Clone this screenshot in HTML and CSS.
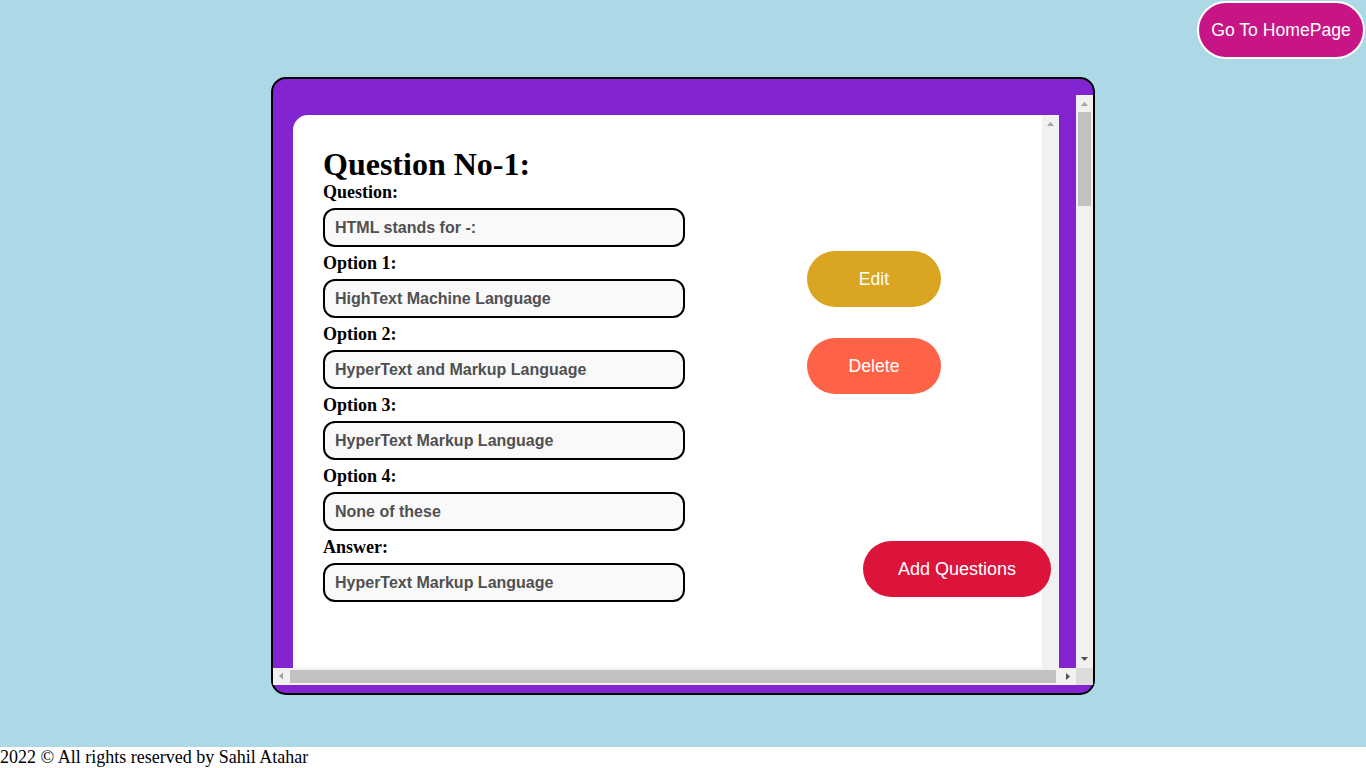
FILE: index.html
```html
<!DOCTYPE html>
<html lang="en">
<head>
<meta charset="utf-8">
<title>Questions</title>
<link rel="stylesheet" href="styles.css">
</head>
<body>
<main class="page">
  <div class="topbar">
    <button class="home-btn">Go To HomePage</button>
  </div>
  <section class="frame">
    <div class="viewport">
      <div class="scroll-area">
        <article class="card">
          <div class="card-body">
            <div class="form">
              <h1 class="q-title">Question No-1:</h1>
              <label class="q-label">Question:</label>
              <input class="q-input" type="text" value="HTML stands for -:" readonly>
              <label class="q-label">Option 1:</label>
              <input class="q-input" type="text" value="HighText Machine Language" readonly>
              <label class="q-label">Option 2:</label>
              <input class="q-input" type="text" value="HyperText and Markup Language" readonly>
              <label class="q-label">Option 3:</label>
              <input class="q-input" type="text" value="HyperText Markup Language" readonly>
              <label class="q-label">Option 4:</label>
              <input class="q-input" type="text" value="None of these" readonly>
              <label class="q-label">Answer:</label>
              <input class="q-input" type="text" value="HyperText Markup Language" readonly>
            </div>
            <div class="actions">
              <button class="pill edit">Edit</button>
              <button class="pill delete">Delete</button>
            </div>
          </div>
          <div class="sb sb-v">
            <span class="sb-btn"><svg width="17" height="17" viewBox="0 0 17 17"><polygon class="arr-off" points="5,11 12,11 8.5,7"/></svg></span>
            <span class="sb-track"></span>
            <span class="sb-btn"><svg width="17" height="17" viewBox="0 0 17 17"><polygon class="arr-off" points="5,6 12,6 8.5,10"/></svg></span>
          </div>
        </article>
      </div>
      <div class="sb sb-v">
        <span class="sb-btn"><svg width="17" height="17" viewBox="0 0 17 17"><polygon class="arr-off" points="5,11 12,11 8.5,7"/></svg></span>
        <span class="sb-track"><span class="thumb-v"></span></span>
        <span class="sb-btn"><svg width="17" height="17" viewBox="0 0 17 17"><polygon class="arr-on" points="5,6 12,6 8.5,10"/></svg></span>
      </div>
      <div class="sb sb-h">
        <span class="sb-btn"><svg width="17" height="17" viewBox="0 0 17 17"><polygon class="arr-off" points="6,8 10,4.5 10,11.5"/></svg></span>
        <span class="sb-track"><span class="thumb-h"></span></span>
        <span class="sb-btn"><svg width="17" height="17" viewBox="0 0 17 17"><polygon class="arr-on" points="11,8.5 7,5 7,12"/></svg></span>
      </div>
      <div class="sb-corner"></div>
    </div>
    <button class="pill add">Add Questions</button>
  </section>
</main>
<footer class="footer">2022 © All rights reserved by Sahil Atahar</footer>
</body>
</html>
```

FILE: styles.css
```css
html, body {
  margin: 0;
  padding: 0;
  background: #ffffff;
  font-family: "Liberation Serif", "Times New Roman", serif;
}

.page {
  background: #add8e6;
  height: 747px;
  display: flex;
  flex-direction: column;
}

.topbar {
  display: flex;
  justify-content: flex-end;
}

.home-btn {
  margin: 1px 1px 0 0;
  width: 168px;
  height: 58px;
  box-sizing: border-box;
  border: 2px solid #ffffff;
  border-radius: 29px;
  background: #c71585;
  color: #ffffff;
  font-family: "Liberation Sans", Arial, sans-serif;
  font-size: 17.6px;
  padding: 0;
  cursor: pointer;
}

.frame {
  position: relative;
  align-self: center;
  margin-top: 18px;
  width: 824px;
  height: 618px;
  box-sizing: border-box;
  border: 2px solid #000000;
  border-radius: 15px;
  background: #8224d0;
  padding: 16px 0 8px;
}

.viewport {
  height: 590px;
  display: grid;
  grid-template-columns: 803px 17px;
  grid-template-rows: 573px 17px;
}

.scroll-area {
  overflow: hidden;
  padding: 20px 0 0 20px;
}

.card {
  width: 766px;
  height: 633px;
  background: #ffffff;
  border-radius: 15px 0 0 15px;
  display: grid;
  grid-template-columns: 749px 17px;
  overflow: hidden;
}

.card-body {
  padding: 32px 30px;
  display: flex;
  align-items: flex-start;
}

/* drawn scrollbars */
.sb {
  display: flex;
  background: #f1f1f1;
}

.sb-v {
  flex-direction: column;
  width: 17px;
}

.sb-h {
  flex-direction: row;
  height: 17px;
}

.sb-btn {
  flex: none;
  width: 17px;
  height: 17px;
  display: block;
}

.sb-btn svg {
  display: block;
}

.arr-off {
  fill: #a3a3a3;
}

.arr-on {
  fill: #505050;
}

.sb-track {
  flex: 1;
  display: flex;
}

.sb-v .sb-track {
  flex-direction: column;
}

.thumb-v {
  width: 13px;
  height: 94px;
  margin: 0 2px;
  background: #c1c1c1;
}

.thumb-h {
  width: 766px;
  height: 13px;
  margin: 2px 0;
  background: #c1c1c1;
}

.sb-corner {
  background: #dcdcdc;
}

.form {
  width: 362px;
  flex: none;
}

.q-title {
  margin: 0;
  font-size: 32px;
  line-height: 35px;
  font-weight: bold;
  color: #000000;
}

.q-label {
  display: block;
  font-size: 18px;
  line-height: 21px;
  font-weight: bold;
  color: #000000;
}

.q-input {
  display: block;
  width: 362px;
  height: 39px;
  box-sizing: border-box;
  margin: 5px 0 6px;
  padding: 0 10px;
  border: 2px solid #000000;
  border-radius: 12px;
  background: #f9f9f9;
  color: #505050;
  font-family: "Liberation Sans", Arial, sans-serif;
  font-size: 16px;
  font-weight: bold;
  outline: none;
}

.actions {
  margin-left: 122px;
  margin-top: 104px;
  display: flex;
  flex-direction: column;
  gap: 31px;
}

.pill {
  height: 56px;
  border: none;
  border-radius: 28px;
  color: #ffffff;
  font-family: "Liberation Sans", Arial, sans-serif;
  font-size: 17.6px;
  padding: 0;
  cursor: pointer;
}

.edit {
  width: 134px;
  background: #daa520;
}

.delete {
  width: 134px;
  background: #ff6347;
}

.add {
  position: absolute;
  top: 462px;
  right: 42px;
  width: 188px;
  font-size: 18px;
  background: #dc143c;
}

.footer {
  font-size: 18px;
  color: #000000;
}
```
